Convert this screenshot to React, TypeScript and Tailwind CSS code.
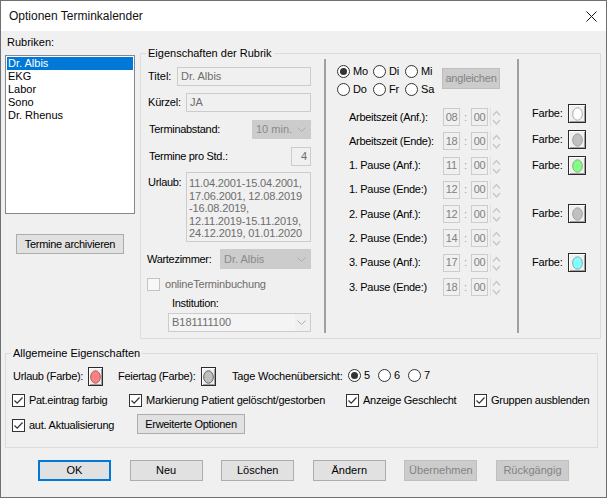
import React from "react";

// Zeiten für den ausgewählten Wochentag
const times: [string, string, string][] = [
  ["Arbeitszeit (Anf.):", "08", "00"],
  ["Arbeitszeit (Ende):", "18", "00"],
  ["1. Pause (Anf.):", "11", "00"],
  ["1. Pause (Ende:)", "12", "00"],
  ["2. Pause (Anf.):", "12", "00"],
  ["2. Pause (Ende:)", "14", "00"],
  ["3. Pause (Anf.):", "17", "00"],
  ["3. Pause (Ende:)", "18", "00"],
];

const rubriken = ["Dr. Albis", "EKG", "Labor", "Sono", "Dr. Rhenus"];

function Radio({ on }: { on?: boolean }) {
  return (
    <span className="w-[13px] h-[13px] rounded-full border border-[#333] bg-white flex items-center justify-center shrink-0">
      {on && <span className="w-[7px] h-[7px] rounded-full bg-[#333]" />}
    </span>
  );
}

function Box({ checked, disabled }: { checked?: boolean; disabled?: boolean }) {
  return (
    <span
      className={`w-[13px] h-[13px] border flex items-center justify-center shrink-0 ${
        disabled ? "border-[#c4c4c4] bg-[#f7f7f7]" : "border-[#333] bg-white"
      }`}
    >
      {checked && (
        <svg width="11" height="11" viewBox="0 0 11 11">
          <path d="M1.5 5.5 L4.2 8.2 L9.5 2.5" fill="none" stroke="#333" strokeWidth="1.2" />
        </svg>
      )}
    </span>
  );
}

function ColorBtn({ fill, stroke, w }: { fill: string; stroke: string; w: string }) {
  return (
    <div
      className={`${w} h-[19px] shrink-0 flex items-center justify-center border border-[#2b2b2b] bg-[#f0f0f0] shadow-[inset_1px_1px_0_#fff,inset_-1px_-1px_0_#a0a0a0]`}
    >
      <svg width="11" height="14" viewBox="0 0 11 14">
        <ellipse cx="5.5" cy="7" rx="4.8" ry="6.2" fill={fill} stroke={stroke} strokeWidth="1" />
      </svg>
    </div>
  );
}

function Chevron() {
  return (
    <svg width="9" height="5" viewBox="0 0 9 5" className="shrink-0">
      <path d="M0.5 0.5 L4.5 4.5 L8.5 0.5" fill="none" stroke="#adadad" strokeWidth="1" />
    </svg>
  );
}

function TimeRow({ label, h, m }: { label: string; h: string; m: string }) {
  return (
    <div className="flex items-center h-[18px] pl-[23px]">
      <span className="w-[94px] tracking-[-0.3px]">{label}</span>
      <div className="w-[17px] h-[18px] border border-[#cccccc] bg-[#f0f0f0] text-[#808080] flex items-center justify-center tracking-[-0.3px]">
        {h}
      </div>
      <span className="w-[11px] text-center text-[#a0a0a0]">:</span>
      <div className="w-[17px] h-[18px] border border-[#cccccc] bg-[#f0f0f0] text-[#808080] flex items-center justify-center tracking-[-0.3px]">
        {m}
      </div>
      <div className="ml-[2px] w-px h-[18px] bg-[#e0e0e0]" />
      <svg width="9" height="18" viewBox="0 0 9 18" className="ml-[1px]">
        <path d="M1 7.5 L4.5 3.5 L8 7.5" fill="none" stroke="#c6c6c6" strokeWidth="1.3" />
        <path d="M1 12 L4.5 16 L8 12" fill="none" stroke="#c6c6c6" strokeWidth="1.3" />
      </svg>
    </div>
  );
}

function Btn({ children, kind }: { children: React.ReactNode; kind?: "default" | "disabled" }) {
  const cls =
    kind === "default"
      ? "border-2 border-[#0078d7] bg-[#e1e1e1] text-black"
      : kind === "disabled"
      ? "border border-[#bfbfbf] bg-[#cccccc] text-[#838383]"
      : "border border-[#adadad] bg-[#e1e1e1] text-black";
  return (
    <div className={`w-[73px] h-[21px] flex items-center justify-center shrink-0 ${cls}`}>{children}</div>
  );
}

export default function App() {
  return (
    <div className="w-[607px] h-[498px] border border-[#707070] bg-[#f0f0f0] font-['Liberation_Sans',Arial,sans-serif] text-[11px] leading-[13px] text-black overflow-hidden">
      {/* Titelleiste */}
      <div className="h-[30px] bg-white flex items-center pl-[8px] pr-[9px]">
        <span className="text-[12px] leading-[14px] text-[#111]">Optionen Terminkalender</span>
        <svg width="11" height="11" viewBox="0 0 11 11" className="ml-auto">
          <path d="M0.5 0.5 L10.5 10.5 M10.5 0.5 L0.5 10.5" stroke="#111" strokeWidth="1" />
        </svg>
      </div>

      {/* Oberer Bereich */}
      <div className="flex items-start">
        {/* Rubriken */}
        <div className="ml-[4px] w-[130px] pt-[5px] flex flex-col">
          <span className="pl-[2px]">Rubriken:</span>
          <div className="mt-[6px] h-[159px] border border-[#828790] bg-white p-px">
            {rubriken.map((r, i) => (
              <div
                key={r}
                className={`h-[13px] pl-px leading-[13px] ${i === 0 ? "bg-[#0078d7] text-white" : ""}`}
              >
                {r}
              </div>
            ))}
          </div>
          <div className="mt-[20px] ml-[11px] w-[108px] h-[20px] border border-[#adadad] bg-[#e1e1e1] flex items-center justify-center tracking-[-0.3px]">
            Termine archivieren
          </div>
        </div>

        {/* Eigenschaften der Rubrik */}
        <fieldset className="ml-[5px] mt-[16px] w-[461px] border border-[#dcdcdc]">
          <legend className="ml-[5px] px-[2px] leading-[12px]">Eigenschaften der Rubrik</legend>
          <div className="h-[279px] flex">
            {/* linke Spalte */}
            <div className="w-[183px] flex flex-col">
              <div className="mt-[8px] h-[19px] flex items-center pl-[7px] pr-[13px]">
                <span>Titel:</span>
                <div className="ml-auto w-[134px] h-[19px] border border-[#cccccc] bg-[#f0f0f0] text-[#6d6d6d] pl-[3px] flex items-center">
                  Dr. Albis
                </div>
              </div>
              <div className="mt-[7px] h-[19px] flex items-center pl-[7px] pr-[13px]">
                <span className="tracking-[-0.2px]">Kürzel:</span>
                <div className="ml-auto w-[125px] h-[19px] border border-[#cccccc] bg-[#f0f0f0] text-[#6d6d6d] pl-[3px] flex items-center">
                  JA
                </div>
              </div>
              <div className="mt-[8px] h-[19px] flex items-center pl-[8px] pr-[13px]">
                <span className="tracking-[-0.3px]">Terminabstand:</span>
                <div className="ml-auto w-[59px] h-[19px] border border-[#cccccc] bg-[#cccccc] text-[#8a8a8a] pl-[3px] pr-[4px] flex items-center justify-between">
                  <span>10 min.</span>
                  <Chevron />
                </div>
              </div>
              <div className="mt-[8px] h-[19px] flex items-center pl-[8px] pr-[13px]">
                <span className="tracking-[-0.3px]">Termine pro Std.:</span>
                <div className="ml-auto w-[20px] h-[19px] border border-[#cccccc] bg-[#f0f0f0] text-[#6d6d6d] pr-[3px] flex items-center justify-end">
                  4
                </div>
              </div>
              <div className="mt-[6px] h-[70px] flex items-start pl-[7px] pr-[13px]">
                <span className="mt-[4px] tracking-[-0.3px]">Urlaub:</span>
                <div className="ml-auto w-[125px] h-[70px] border border-[#cccccc] bg-[#f0f0f0] text-[#6d6d6d] pl-[2px] pt-[4px] leading-[12.5px] tracking-[-0.15px]">
                  <div>11.04.2001-15.04.2001,</div>
                  <div>17.06.2001, 12.08.2019</div>
                  <div>-16.08.2019,</div>
                  <div>12.11.2019-15.11.2019,</div>
                  <div>24.12.2019, 01.01.2020</div>
                </div>
              </div>
              <div className="mt-[7px] h-[20px] flex items-center pl-[6px] pr-[13px]">
                <span className="tracking-[-0.3px]">Wartezimmer:</span>
                <div className="ml-auto w-[91px] h-[20px] border border-[#cccccc] bg-[#cccccc] text-[#8a8a8a] pl-[3px] pr-[4px] flex items-center justify-between">
                  <span>Dr. Albis</span>
                  <Chevron />
                </div>
              </div>
              <div className="mt-[9px] h-[13px] flex items-center pl-[6px] gap-[5px]">
                <Box disabled />
                <span className="text-[#6d6d6d] tracking-[-0.2px]">onlineTerminbuchung</span>
              </div>
              <div className="mt-[6px] h-[13px] pl-[31px] tracking-[-0.3px]">Institution:</div>
              <div className="mt-[3px] ml-[27px] w-[143px] h-[19px] border border-[#cccccc] bg-[#f0f0f0] text-[#6d6d6d] flex items-center">
                <div className="h-[17px] w-[126px] bg-[#f4f4f4] pl-[3px] flex items-center">B181111100</div>
                <div className="ml-auto mr-[4px]">
                  <Chevron />
                </div>
              </div>
            </div>

            <div className="w-[2px] mb-[5px] bg-[#a0a0a0]" />

            {/* Arbeitszeiten */}
            <div className="w-[191px] flex flex-col">
              <div className="mt-[5px] flex items-start pl-[11px]">
                <div className="grid grid-cols-[36px_32px_37px] gap-y-[4px]">
                  {[
                    ["Mo", true],
                    ["Di", false],
                    ["Mi", false],
                    ["Do", false],
                    ["Fr", false],
                    ["Sa", false],
                  ].map(([d, on]) => (
                    <div key={d as string} className="h-[14px] flex items-center gap-[3px]">
                      <Radio on={on as boolean} />
                      <span className="tracking-[-0.2px]">{d as string}</span>
                    </div>
                  ))}
                </div>
                <div className="mt-[4px] w-[58px] h-[21px] border border-[#bfbfbf] bg-[#cccccc] text-[#838383] flex items-center justify-center tracking-[-0.2px]">
                  angleichen
                </div>
              </div>
              <div className="mt-[12px] flex flex-col gap-[6.3px]">
                {times.map(([l, h, m]) => (
                  <TimeRow key={l} label={l} h={h} m={m} />
                ))}
              </div>
            </div>

            <div className="w-[2px] mb-[5px] bg-[#a0a0a0]" />

            {/* Farben */}
            <div className="w-[81px] flex flex-col pl-[13px]">
              <div className="mt-[45px] flex items-center">
                <span className="w-[36px] tracking-[-0.2px]">Farbe:</span>
                <ColorBtn w="w-[18px]" fill="#ffffff" stroke="#a8a8a8" />
              </div>
              <div className="mt-[7px] flex items-center">
                <span className="w-[36px] tracking-[-0.2px]">Farbe:</span>
                <ColorBtn w="w-[18px]" fill="#c0c0c0" stroke="#a0a0a0" />
              </div>
              <div className="mt-[7px] flex items-center">
                <span className="w-[36px] tracking-[-0.2px]">Farbe:</span>
                <ColorBtn w="w-[18px]" fill="#80ff80" stroke="#8aa88a" />
              </div>
              <div className="mt-[29px] flex items-center">
                <span className="w-[36px] tracking-[-0.2px]">Farbe:</span>
                <ColorBtn w="w-[18px]" fill="#c0c0c0" stroke="#a0a0a0" />
              </div>
              <div className="mt-[30px] flex items-center">
                <span className="w-[36px] tracking-[-0.2px]">Farbe:</span>
                <ColorBtn w="w-[18px]" fill="#80ffff" stroke="#88a8a8" />
              </div>
            </div>
          </div>
        </fieldset>
      </div>

      {/* Allgemeine Eigenschaften */}
      <fieldset className="ml-[4px] mt-[8px] w-[593px] border border-[#dcdcdc] pb-[13px]">
        <legend className="ml-[5px] px-[2px] leading-[12px]">Allgemeine Eigenschaften</legend>
        <div className="mt-[8px] h-[19px] flex items-center pl-[7px]">
          <span className="w-[75px] tracking-[-0.3px]">Urlaub (Farbe):</span>
          <ColorBtn w="w-[15px]" fill="#ff8080" stroke="#a06060" />
          <span className="ml-[15px] w-[83px] tracking-[-0.3px]">Feiertag (Farbe):</span>
          <ColorBtn w="w-[15px]" fill="#c0c0c0" stroke="#606060" />
          <span className="ml-[16px] w-[116px] tracking-[-0.2px]">Tage Wochenübersicht:</span>
          <div className="flex">
            {["5", "6", "7"].map((n, i) => (
              <div key={n} className="w-[30px] flex items-center gap-[3px] -mt-[3px]">
                <Radio on={i === 0} />
                <span>{n}</span>
              </div>
            ))}
          </div>
        </div>
        <div className="mt-[8px] h-[13px] flex items-center pl-[6px]">
          <div className="w-[117px] flex items-center gap-[4px]">
            <Box checked />
            <span className="tracking-[-0.3px]">Pat.eintrag farbig</span>
          </div>
          <div className="w-[217px] flex items-center gap-[4px]">
            <Box checked />
            <span className="tracking-[-0.25px]">Markierung Patient gelöscht/gestorben</span>
          </div>
          <div className="w-[128px] flex items-center gap-[4px]">
            <Box checked />
            <span className="tracking-[-0.25px]">Anzeige Geschlecht</span>
          </div>
          <div className="flex items-center gap-[4px]">
            <Box checked />
            <span className="tracking-[-0.25px]">Gruppen ausblenden</span>
          </div>
        </div>
        <div className="mt-[7px] h-[20px] flex items-center pl-[6px]">
          <div className="w-[125px] flex items-center gap-[4px] mt-[3px]">
            <Box checked />
            <span className="tracking-[-0.25px]">aut. Aktualisierung</span>
          </div>
          <div className="w-[108px] h-[20px] border border-[#adadad] bg-[#e1e1e1] flex items-center justify-center tracking-[-0.3px]">
            Erweiterte Optionen
          </div>
        </div>
      </fieldset>

      {/* Schaltflächen */}
      <div className="mt-[12px] pl-[37px] flex gap-[18.6px]">
        <Btn kind="default">OK</Btn>
        <Btn>Neu</Btn>
        <Btn>Löschen</Btn>
        <Btn>Ändern</Btn>
        <Btn kind="disabled">Übernehmen</Btn>
        <Btn kind="disabled">Rückgängig</Btn>
      </div>
    </div>
  );
}
